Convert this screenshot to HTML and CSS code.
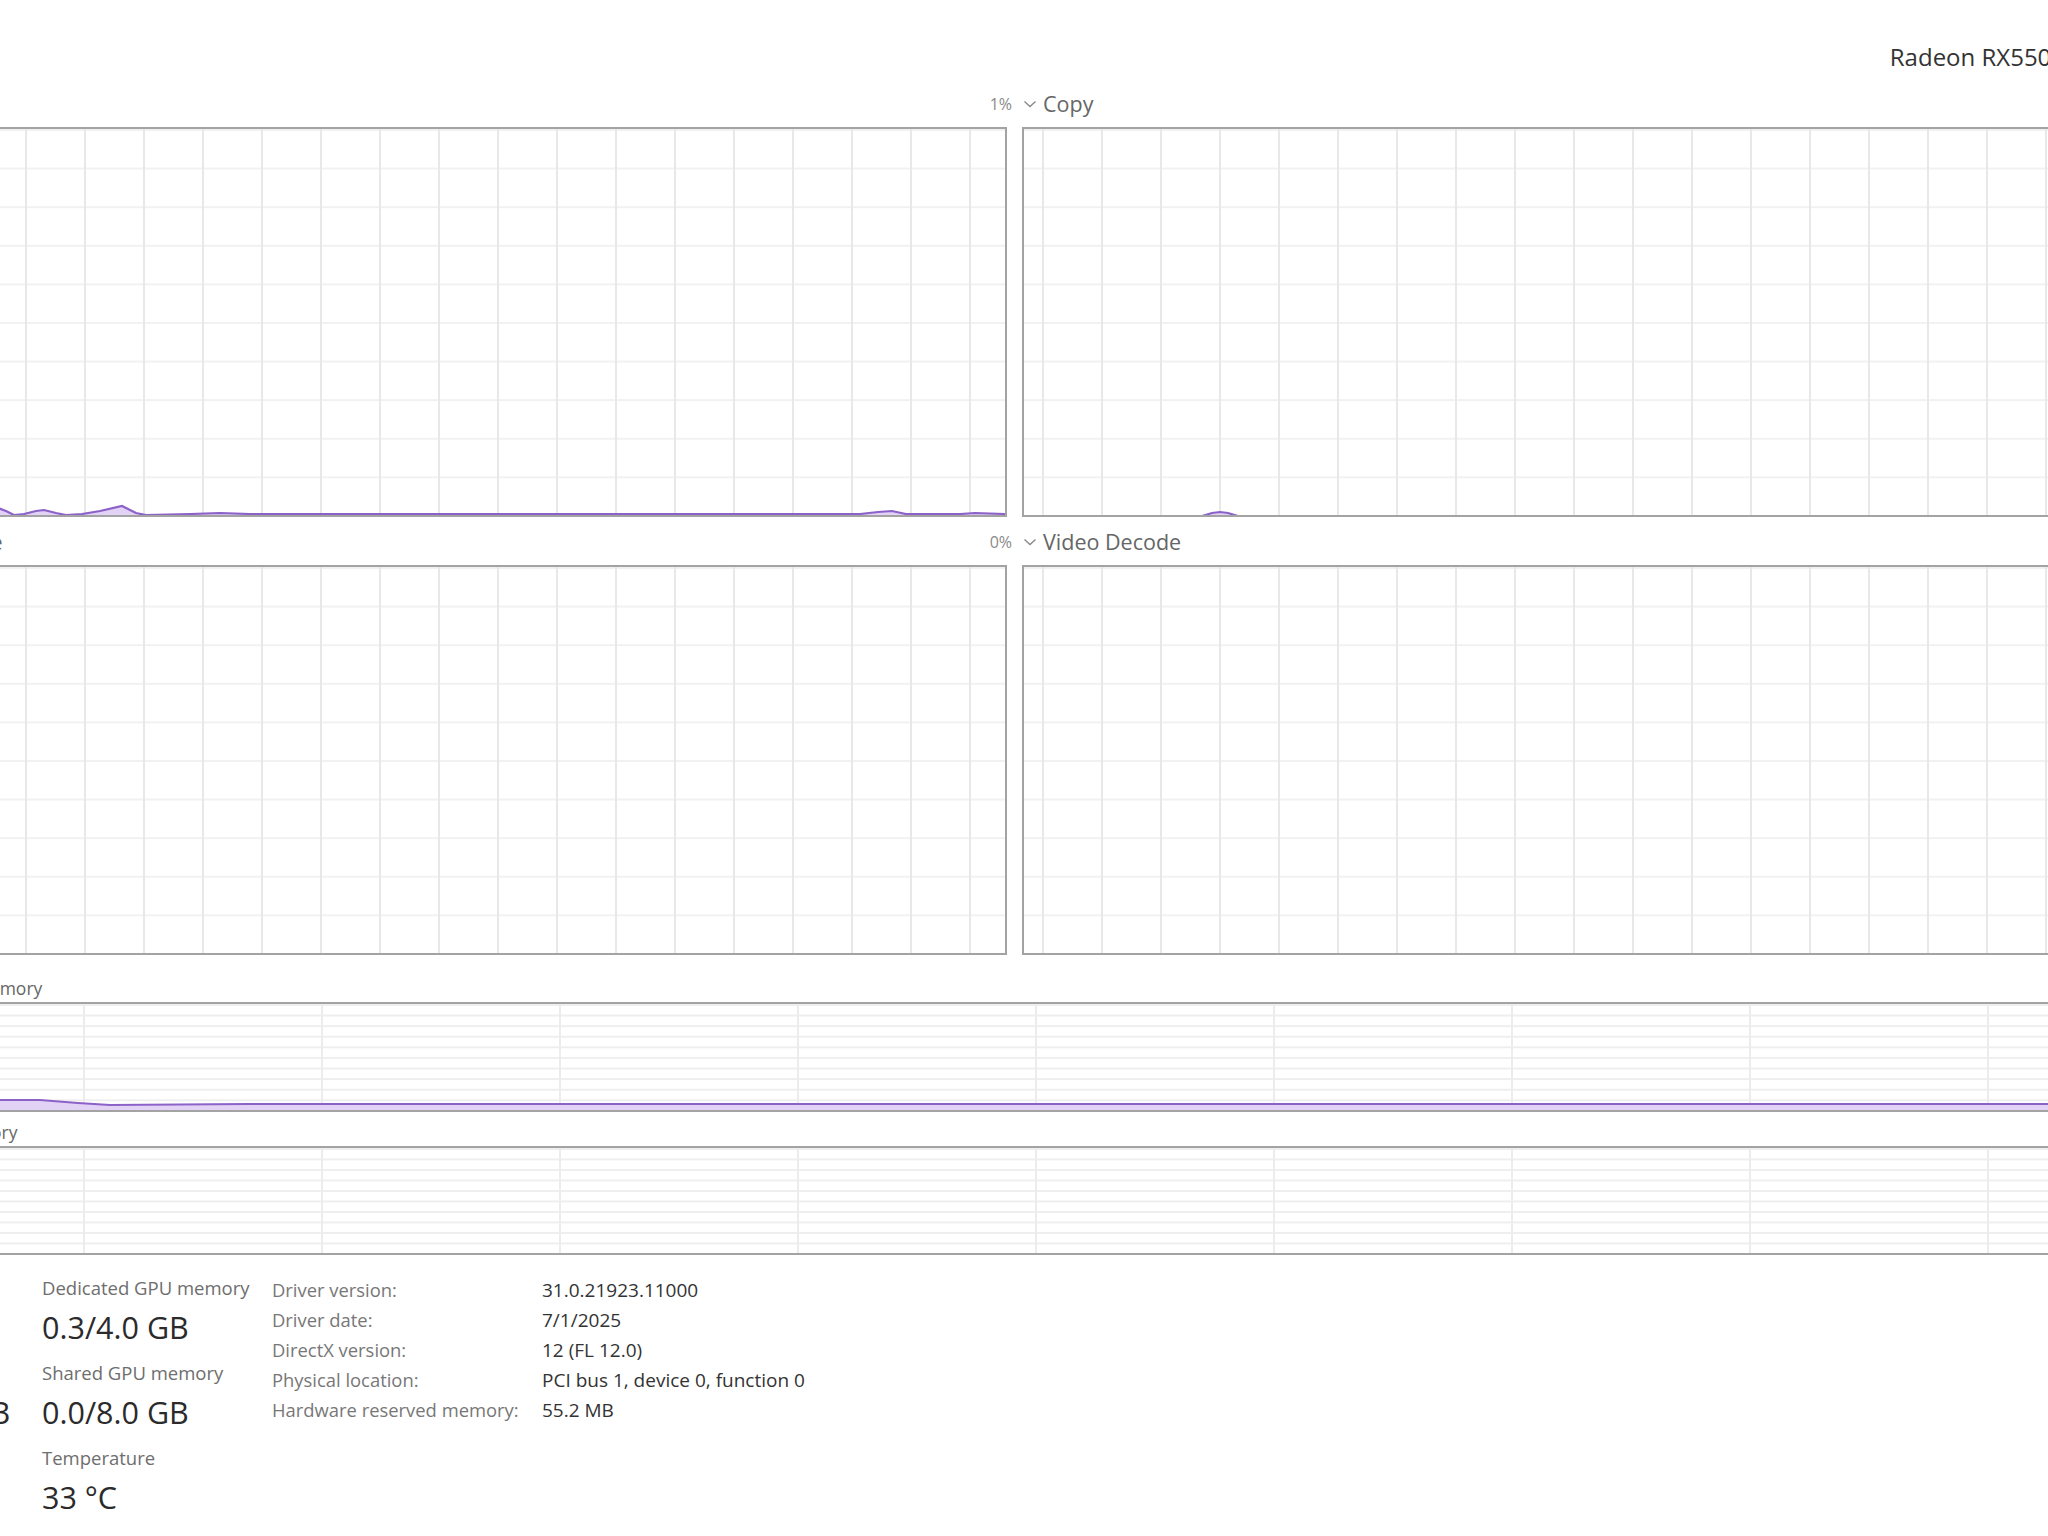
FILE: index.html
```html
<!DOCTYPE html>
<html lang="en">
<head>
<meta charset="utf-8">
<title>Task Manager - GPU</title>
<link rel="stylesheet" href="styles.css">
</head>
<body>
<div class="page">
  <header class="top">
    <h1 class="gpu-title">GPU</h1>
    <div class="gpu-name">Radeon RX550 Series</div>
  </header>

  <section class="engines">
    <div class="engine">
      <div class="engine-head">
        <svg class="chev" viewBox="0 0 14 8"><path d="M1.5 1.5 L7 6.5 L12.5 1.5"/></svg>
        <span class="engine-name">3D</span>
        <span class="engine-pct">1%</span>
      </div>
      <div class="chart grid-a">
        <svg viewBox="0 0 1157 386" preserveAspectRatio="none">
          <path class="area" d="M0 385 L122 385 L144 381 L150 379 L158 382 L166 386 L176 385 L188 382 L196 381 L208 384 L218 386 L234 385 L252 382 L274 377 L288 384 L298 386 L342 385 L372 384 L402 385 L1012 385 L1030 383 L1044 382 L1058 385 L1112 385 L1127 384 L1157 385 L1157 387 L0 387 Z"/>
          <path class="line" d="M0 385 L122 385 L144 381 L150 379 L158 382 L166 386 L176 385 L188 382 L196 381 L208 384 L218 386 L234 385 L252 382 L274 377 L288 384 L298 386 L342 385 L372 384 L402 385 L1012 385 L1030 383 L1044 382 L1058 385 L1112 385 L1127 384 L1157 385"/>
        </svg>
      </div>
    </div>

    <div class="engine">
      <div class="engine-head">
        <svg class="chev" viewBox="0 0 14 8"><path d="M1.5 1.5 L7 6.5 L12.5 1.5"/></svg>
        <span class="engine-name">Copy</span>
        <span class="engine-pct">0%</span>
      </div>
      <div class="chart grid-b">
        <svg viewBox="0 0 1157 386" preserveAspectRatio="none">
          <path class="area" d="M0 387 L178 387 L188 384 L196 383 L204 384 L214 387 L1157 387 Z"/>
          <path class="line" d="M0 387 L178 387 L188 384 L196 383 L204 384 L214 387 L1157 387"/>
        </svg>
      </div>
    </div>

    <div class="engine">
      <div class="engine-head">
        <svg class="chev" viewBox="0 0 14 8"><path d="M1.5 1.5 L7 6.5 L12.5 1.5"/></svg>
        <span class="engine-name">Video Encode</span>
        <span class="engine-pct">0%</span>
      </div>
      <div class="chart grid-a"></div>
    </div>

    <div class="engine">
      <div class="engine-head">
        <svg class="chev" viewBox="0 0 14 8"><path d="M1.5 1.5 L7 6.5 L12.5 1.5"/></svg>
        <span class="engine-name">Video Decode</span>
        <span class="engine-pct">0%</span>
      </div>
      <div class="chart grid-b"></div>
    </div>
  </section>

  <section class="memory">
    <div class="mem-head">
      <span class="mem-label">Dedicated GPU memory</span>
      <span class="mem-max">4.0 GB</span>
    </div>
    <div class="mem-chart mem-dedicated">
      <svg viewBox="0 0 2333 106" preserveAspectRatio="none">
        <path class="area" d="M0 96 L192 96 L230 99 L262 101 L400 100 L2333 100 L2333 107 L0 107 Z"/>
        <path class="line" d="M0 96 L192 96 L230 99 L262 101 L400 100 L2333 100"/>
      </svg>
    </div>
    <div class="mem-head mem-head-2">
      <span class="mem-label">Shared GPU memory</span>
      <span class="mem-max">8.0 GB</span>
    </div>
    <div class="mem-chart mem-shared"></div>
  </section>

  <section class="stats">
    <div class="stat-col">
      <div class="stat">
        <div class="stat-label">Utilization</div>
        <div class="stat-value">1%</div>
      </div>
      <div class="stat">
        <div class="stat-label">GPU Memory</div>
        <div class="stat-value">0.3/12.0 GB</div>
      </div>
    </div>
    <div class="stat-col">
      <div class="stat">
        <div class="stat-label">Dedicated GPU memory</div>
        <div class="stat-value">0.3/4.0 GB</div>
      </div>
      <div class="stat">
        <div class="stat-label">Shared GPU memory</div>
        <div class="stat-value">0.0/8.0 GB</div>
      </div>
      <div class="stat">
        <div class="stat-label">Temperature</div>
        <div class="stat-value">33 °C</div>
      </div>
    </div>
    <dl class="details">
      <dt>Driver version:</dt><dd>31.0.21923.11000</dd>
      <dt>Driver date:</dt><dd>7/1/2025</dd>
      <dt>DirectX version:</dt><dd>12 (FL 12.0)</dd>
      <dt>Physical location:</dt><dd>PCI bus 1, device 0, function 0</dd>
      <dt>Hardware reserved memory:</dt><dd>55.2 MB</dd>
    </dl>
  </section>
</div>
</body>
</html>
```

FILE: styles.css
```css
* {
  box-sizing: border-box;
  margin: 0;
  padding: 0;
}

html,
body {
  width: 2048px;
  height: 1536px;
  overflow: hidden;
  background: #ffffff;
}

body {
  font-family: "Open Sans", "Noto Sans", "Liberation Sans", sans-serif;
  color: #333333;
}

.page {
  margin-left: -154px;
  width: 2337px;
  display: flex;
  flex-direction: column;
}

/* header */
.top {
  display: flex;
  justify-content: space-between;
  align-items: flex-end;
  height: 73px;
}

.gpu-title {
  font-size: 36px;
  font-weight: 400;
  line-height: 48px;
}

.gpu-name {
  font-size: 24px;
  line-height: 32px;
  color: #333333;
  margin-right: 58px;
  white-space: nowrap;
}

/* engine charts */
.engines {
  margin-top: 17px;
  display: grid;
  grid-template-columns: 1161px 1161px;
  column-gap: 15px;
  row-gap: 11px;
}

.engine {
  display: flex;
  flex-direction: column;
  gap: 9px;
}

.engine-head {
  display: flex;
  align-items: center;
  height: 28px;
}

.chev {
  width: 14px;
  height: 8px;
  margin-left: 1px;
  margin-right: 6px;
  flex: none;
}

.chev path {
  fill: none;
  stroke: #8a8a8a;
  stroke-width: 1.4;
}

.engine-name {
  font-size: 21.5px;
  line-height: 28px;
  color: #666666;
  white-space: nowrap;
}

.engine-pct {
  margin-left: auto;
  margin-right: -5px;
  font-size: 16px;
  color: #8a8a8a;
}

.chart {
  height: 390px;
  border: 2px solid #a3a3a3;
  background-color: #ffffff;
  background-image:
    linear-gradient(to right, #e8e8e8 2px, transparent 2px),
    linear-gradient(to bottom, #f1f1f1 1.5px, transparent 1.5px);
  background-size: 59px 100%, 100% 10%;
}

.grid-a {
  background-position: 0 0, 0 0;
}

.grid-b {
  background-position: 18px 0, 0 0;
}

.chart svg,
.mem-chart svg {
  display: block;
  width: 100%;
  height: 100%;
}

.area {
  fill: #e2d2f5;
  stroke: none;
}

.line {
  fill: none;
  stroke: #8c62c9;
  stroke-width: 2.2;
}

/* memory charts */
.memory {
  margin-top: 19px;
  display: flex;
  flex-direction: column;
}

.mem-head {
  display: flex;
  justify-content: space-between;
  height: 28px;
  line-height: 28px;
  font-size: 17.5px;
  color: #666666;
}

.mem-head-2 {
  margin-top: 6px;
}

.mem-chart {
  border: 2px solid #a3a3a3;
  background-color: #ffffff;
  background-image:
    linear-gradient(to right, #ececec 2px, transparent 2px),
    linear-gradient(to bottom, #eeeeee 1.5px, transparent 1.5px);
  background-size: 238px 100%, 100% 10%;
  background-position: 235px 0, 0 0;
}

.mem-dedicated {
  height: 110px;
}

.mem-shared {
  height: 109px;
}

/* statistics */
.stats {
  margin-top: 20px;
  display: grid;
  grid-template-columns: 196px 230px auto;
  align-items: start;
}

.stat-col {
  display: flex;
  flex-direction: column;
  gap: 13px;
}

.stat {
  display: flex;
  flex-direction: column;
  gap: 6px;
}

.stat-label {
  font-size: 18.5px;
  line-height: 26px;
  color: #6e6e6e;
  white-space: nowrap;
}

.stat-value {
  font-size: 30.5px;
  line-height: 40px;
  color: #2b2b2b;
  white-space: nowrap;
}

.details {
  display: grid;
  grid-template-columns: 270px auto;
  line-height: 30px;
  margin-top: 0;
}

.details dt {
  font-size: 18.4px;
  color: #777777;
  white-space: nowrap;
}

.details dd {
  font-size: 19px;
  color: #333333;
  white-space: nowrap;
}
```
